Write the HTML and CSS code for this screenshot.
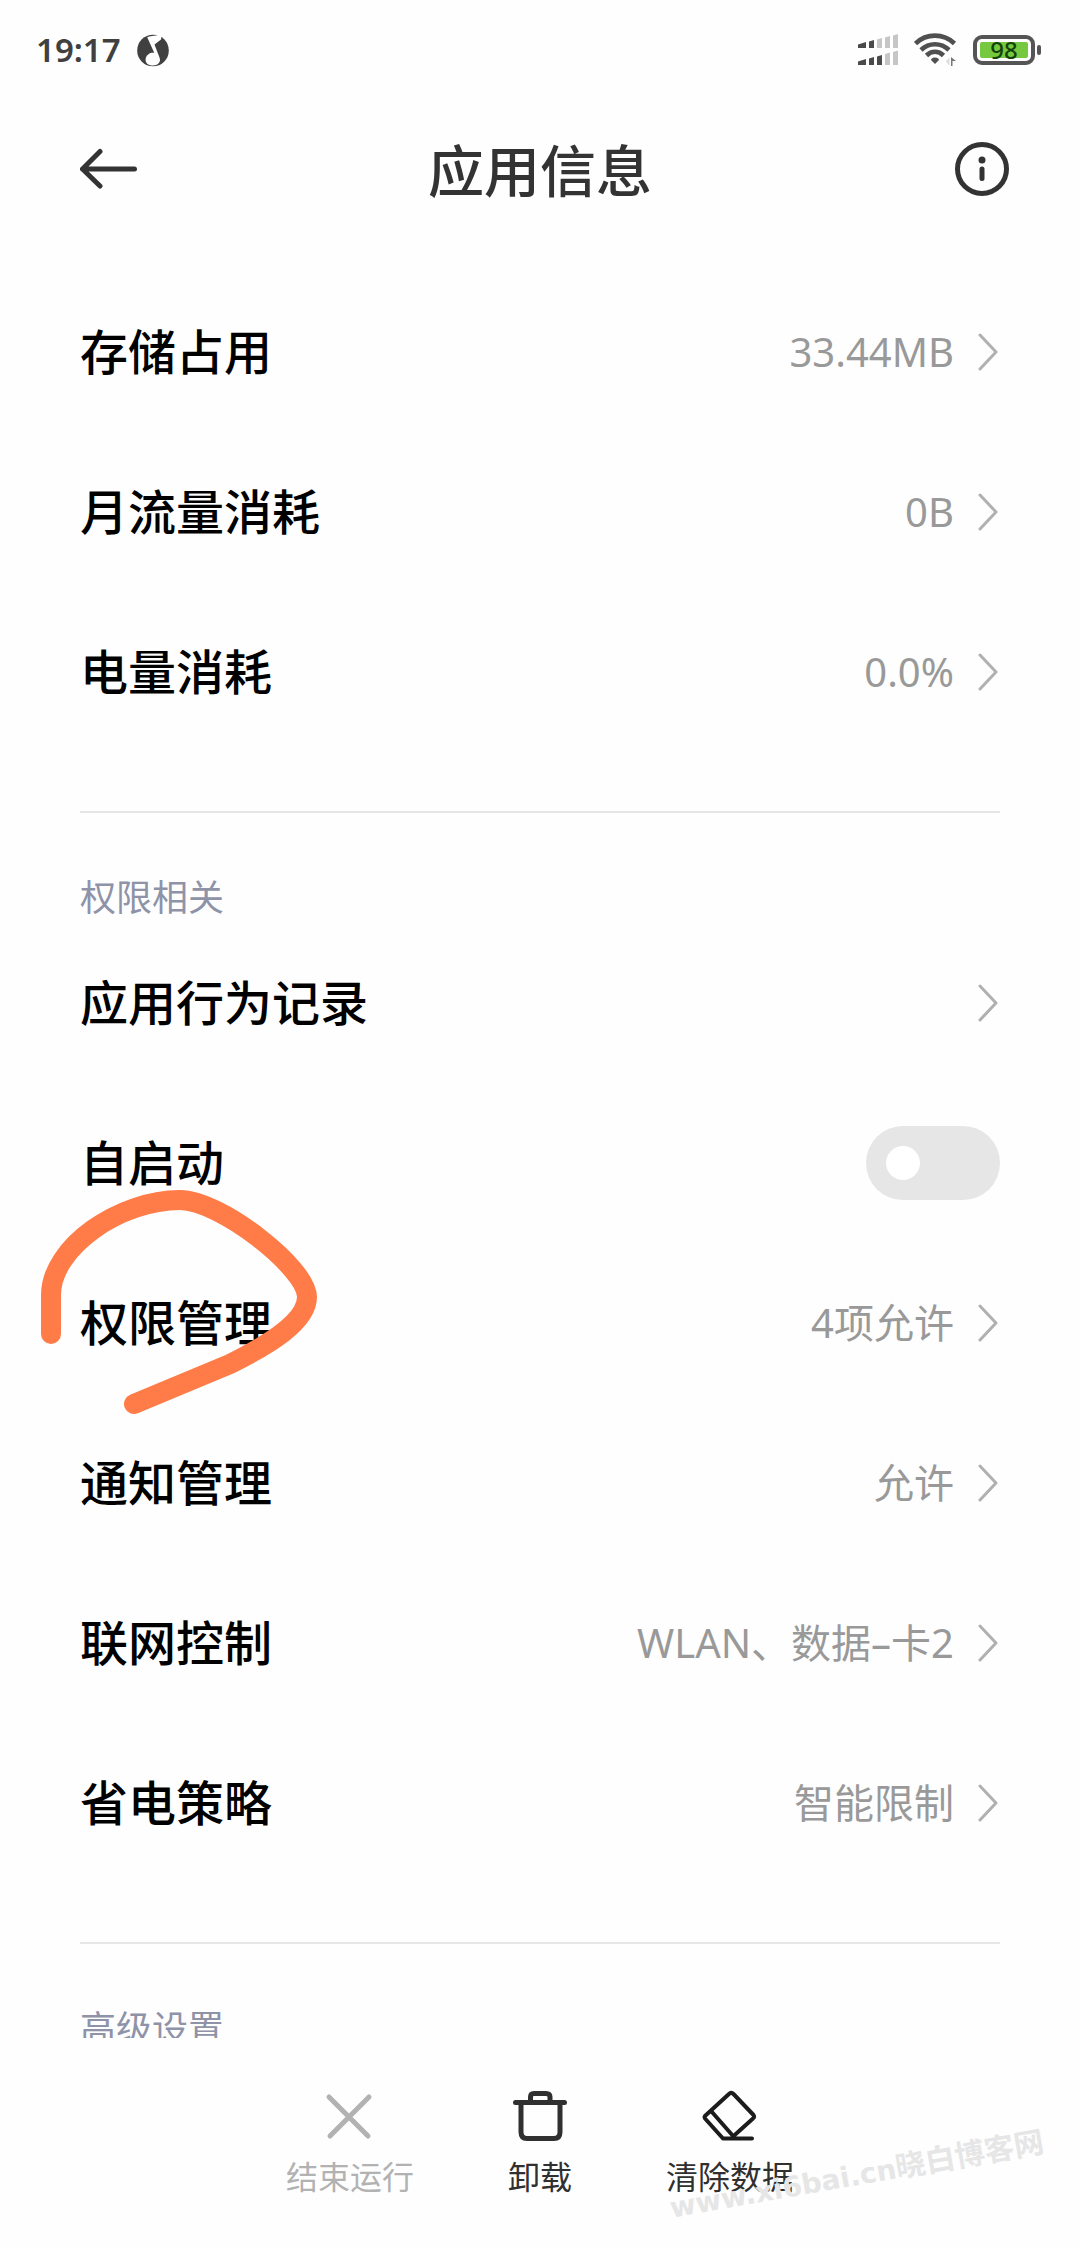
FILE: index.html
```html
<!DOCTYPE html>
<html lang="zh-CN">
<head>
<meta charset="utf-8">
<meta name="viewport" content="width=device-width, initial-scale=1">
<title>应用信息</title>
<link rel="stylesheet" href="styles.css">
</head>
<body>
<svg class="sprite" aria-hidden="true">
  <symbol id="chevron" viewBox="0 0 20 40"><path d="M2 3 18 20 2 37"/></symbol>
</svg>

<div class="status">
  <div class="status-group">
    <time class="clock">19:17</time>
    <svg class="music" viewBox="0 0 32 34" aria-hidden="true">
      <circle cx="16" cy="17.500" r="15.800" fill="#404040"/>
      <path d="M10.200 4.200C14 2.600 20 3.500 25 0L24 6.500 17.500 11.500 22.500 24.500C24.500 29 20.500 32.500 16 32.500S7.500 30 8.800 25C9.800 21 14 19 17.200 19.800Z" fill="#fff"/>
    </svg>
  </div>
  <div class="status-group">
    <svg class="signal" viewBox="0 0 40 32" aria-hidden="true">
      <g fill="#4a4a4a">
        <path d="M0 10.500 8 8V14H0ZM11 7.500 16 6V14H11ZM0 27.500 8 25V31H0ZM11 24.500 16 23V31H11ZM19 22.500 24 21V31H19Z"/>
      </g>
      <path fill="#c6c6c6" d="M19 5.500 24 4V14H19ZM27 3.500 32 2V14H27ZM35 1.500 40 0V14H35ZM27 20 32 18.500V31H27ZM35 18 40 16.500V31H35Z"/>
    </svg>
    <svg class="wifi" viewBox="0 0 43 34" aria-hidden="true">
      <g fill="none" stroke="#505050" stroke-width="4.600">
        <path d="M1.500 10.500C12.500 0 29.500 0 40.500 10.500"/>
        <path d="M7 17C15 9.300 27 9.300 35 17"/>
        <path d="M12.500 22.500C17.500 17.500 24.500 17.500 29.500 22.500"/>
      </g>
      <path d="M21 24.500C24 24.500 25 26 25 27L21 31 17 27C17 26 18 24.500 21 24.500Z" fill="#505050"/>
      <path d="M37 24V33H38.500V28H42Z" fill="#777"/>
      <path d="M35.500 24V33L32 28.500Z" fill="#ddd"/>
    </svg>
    <div class="battery"><span class="battery-body"><span class="battery-level">98</span></span><span class="battery-tip"></span></div>
  </div>
</div>

<header class="header">
  <button class="icon-button" type="button" aria-label="返回">
    <svg viewBox="0 0 60 60"><path d="M2.500 30H54.500M20 12.500 2.500 30 20 47" fill="none" stroke="#333" stroke-width="5" stroke-linecap="round" stroke-linejoin="round"/></svg>
  </button>
  <h1 class="title">应用信息</h1>
  <button class="icon-button" type="button" aria-label="信息">
    <svg viewBox="0 0 60 60"><circle cx="30" cy="30" r="24.500" fill="none" stroke="#333" stroke-width="5"/><circle cx="30" cy="21" r="3.500" fill="#333"/><path d="M30 30V39.500" stroke="#333" stroke-width="5" stroke-linecap="round"/></svg>
  </button>
</header>

<main class="content">
  <section class="section">
    <a class="row" href="#storage"><span class="name">存储占用</span><span class="value">33.44MB</span><svg class="chevron"><use href="#chevron"/></svg></a>
    <a class="row" href="#traffic"><span class="name">月流量消耗</span><span class="value">0B</span><svg class="chevron"><use href="#chevron"/></svg></a>
    <a class="row" href="#power"><span class="name">电量消耗</span><span class="value">0.0%</span><svg class="chevron"><use href="#chevron"/></svg></a>
  </section>
  <section class="section">
    <h2 class="section-title">权限相关</h2>
    <a class="row" href="#behavior"><span class="name">应用行为记录</span><svg class="chevron"><use href="#chevron"/></svg></a>
    <div class="row"><label class="name" for="autostart">自启动</label><input class="switch" type="checkbox" role="switch" id="autostart"></div>
    <a class="row" href="#permissions"><span class="name">权限管理</span><span class="value">4项允许</span><svg class="chevron"><use href="#chevron"/></svg>
      <svg class="marker" viewBox="0 0 300 240" aria-hidden="true"><path d="M21 154V115C21 67 90 20 150 20C190 20 277 88 277 117C277 142 238 165 200 184L104 224"/></svg>
    </a>
    <a class="row" href="#notifications"><span class="name">通知管理</span><span class="value">允许</span><svg class="chevron"><use href="#chevron"/></svg></a>
    <a class="row" href="#network"><span class="name">联网控制</span><span class="value">WLAN、数据–卡2</span><svg class="chevron"><use href="#chevron"/></svg></a>
    <a class="row" href="#battery"><span class="name">省电策略</span><span class="value">智能限制</span><svg class="chevron"><use href="#chevron"/></svg></a>
  </section>
  <section class="section">
    <h2 class="section-title">高级设置</h2>
  </section>
</main>

<footer class="actions">
  <button class="action" type="button" disabled>
    <svg viewBox="0 0 64 64"><path d="M11 12 50 51M51 12 12 51" fill="none" stroke="#b2b2b2" stroke-width="5" stroke-linecap="round"/></svg>
    <span>结束运行</span>
  </button>
  <button class="action" type="button">
    <svg viewBox="0 0 64 64"><path d="M7.500 17.500H56.500M13 18V47Q13 53.500 19 53.500H46Q52 53.500 52 47V18M22.500 17V12Q22.500 8.500 26 8.500H38Q42 8.500 42 12V17" fill="none" stroke="#303030" stroke-width="5" stroke-linecap="round"/></svg>
    <span>卸载</span>
  </button>
  <button class="action" type="button">
    <svg viewBox="0 0 64 64"><path d="M25 53.500 7 33.500Q6 32 7.500 30.500L31.500 8.500Q33.500 7 35.500 9L55.500 30Q57 32 55 33.500L34.500 52M13.500 26.500 35.500 51.500M25 53.500H54" fill="none" stroke="#1c1c1c" stroke-width="4" stroke-linecap="round" stroke-linejoin="round"/></svg>
    <span>清除数据</span>
  </button>
  <div class="watermark"><span class="watermark-host">www.xi6bai.cn</span>晓白博客网</div>
</footer>
</body>
</html>
```
FILE: styles.css
```css
* {
  box-sizing: border-box;
}

body {
  margin: 0;
  height: 100vh;
  display: flex;
  flex-direction: column;
  overflow: hidden;
  background: #fefefe;
  color: #000;
  font-family: "Noto Sans", "Noto Sans CJK SC", sans-serif;
}

button {
  padding: 0;
  border: 0;
  background: none;
  font: inherit;
  color: inherit;
}

svg {
  display: block;
  flex: none;
}

.sprite {
  position: absolute;
  width: 0;
  height: 0;
}

.status {
  flex: none;
  height: 100px;
  padding: 0 39px 0 36px;
  display: flex;
  align-items: center;
  justify-content: space-between;
}

.status-group {
  display: flex;
  align-items: center;
  gap: 16px;
}

.clock {
  font-size: 33px;
  line-height: 48px;
  font-weight: 600;
  color: #404040;
}

.music {
  width: 32px;
  height: 34px;
}

.signal {
  width: 40px;
  height: 32px;
}

.wifi {
  width: 43px;
  height: 34px;
}

.battery {
  display: flex;
  align-items: center;
  gap: 2px;
}

.battery-body {
  width: 62px;
  height: 30px;
  padding: 3px;
  border: 4px solid #555;
  border-radius: 9px;
}

.battery-level {
  display: block;
  height: 16px;
  border-radius: 2px;
  background: #76c93f;
  color: #14420b;
  font-size: 24px;
  line-height: 16px;
  font-weight: 500;
  text-align: center;
}

.battery-tip {
  width: 4px;
  height: 10px;
  border-radius: 2px;
  background: #555;
}

.header {
  flex: none;
  height: 138px;
  padding: 0 68px 0 80px;
  display: flex;
  align-items: center;
  justify-content: space-between;
}

.icon-button svg {
  width: 60px;
  height: 60px;
}

.title {
  flex: 1;
  margin: 0;
  padding: 2px 12px 0 0;
  color: #333;
  font-size: 56px;
  line-height: 80px;
  font-weight: 500;
  text-align: center;
}

.content {
  flex: 1;
  min-height: 0;
  padding: 34px 80px 0;
  overflow: hidden;
}

.section + .section {
  margin-top: 59px;
  padding-top: 60px;
  border-top: 2px solid #e6e6e6;
}

.section-title {
  margin: 0;
  color: #8f93a8;
  font-size: 36px;
  line-height: 50px;
  font-weight: 400;
}

.row {
  position: relative;
  height: 160px;
  display: flex;
  align-items: center;
  color: inherit;
  text-decoration: none;
}

.name {
  flex: 1;
  font-size: 48px;
  line-height: 70px;
  font-weight: 500;
}

.value {
  color: #999;
  font-size: 40px;
  line-height: 60px;
}

.chevron {
  width: 20px;
  height: 40px;
  margin: 0 2px 0 24px;
  fill: none;
  stroke: #b0b0b0;
  stroke-width: 3px;
  stroke-linecap: round;
  stroke-linejoin: round;
}

.switch {
  appearance: none;
  width: 134px;
  height: 74px;
  margin: 0;
  padding: 20px;
  border-radius: 37px;
  background: #e6e6e6;
}

.switch::before {
  content: "";
  display: block;
  width: 34px;
  height: 34px;
  border-radius: 50%;
  background: #fff;
}

.switch:checked::before {
  margin-left: auto;
}

.marker {
  position: absolute;
  z-index: 1;
  top: -63px;
  left: -50px;
  width: 300px;
  height: 240px;
  fill: none;
  stroke: #ff7b47;
  stroke-width: 20px;
  stroke-linecap: round;
  stroke-linejoin: round;
  pointer-events: none;
}

.actions {
  position: relative;
  flex: none;
  height: 210px;
  padding-top: 47px;
  display: flex;
  justify-content: center;
  align-items: flex-start;
}

.action {
  width: 190px;
  display: flex;
  flex-direction: column;
  align-items: center;
  gap: 8px;
  color: #303030;
  font-size: 32px;
  line-height: 40px;
}

.action:disabled {
  color: #b2b2b2;
}

.action svg {
  width: 64px;
  height: 64px;
}

.watermark {
  position: absolute;
  right: 34px;
  bottom: 52px;
  color: #e6e6e6;
  font-family: "Noto Sans CJK SC", sans-serif;
  font-size: 30px;
  line-height: 40px;
  font-weight: 700;
  white-space: nowrap;
  transform: rotate(-10deg);
  pointer-events: none;
}

.watermark-host {
  font-family: "DejaVu Sans", sans-serif;
  font-size: 28px;
}
```
